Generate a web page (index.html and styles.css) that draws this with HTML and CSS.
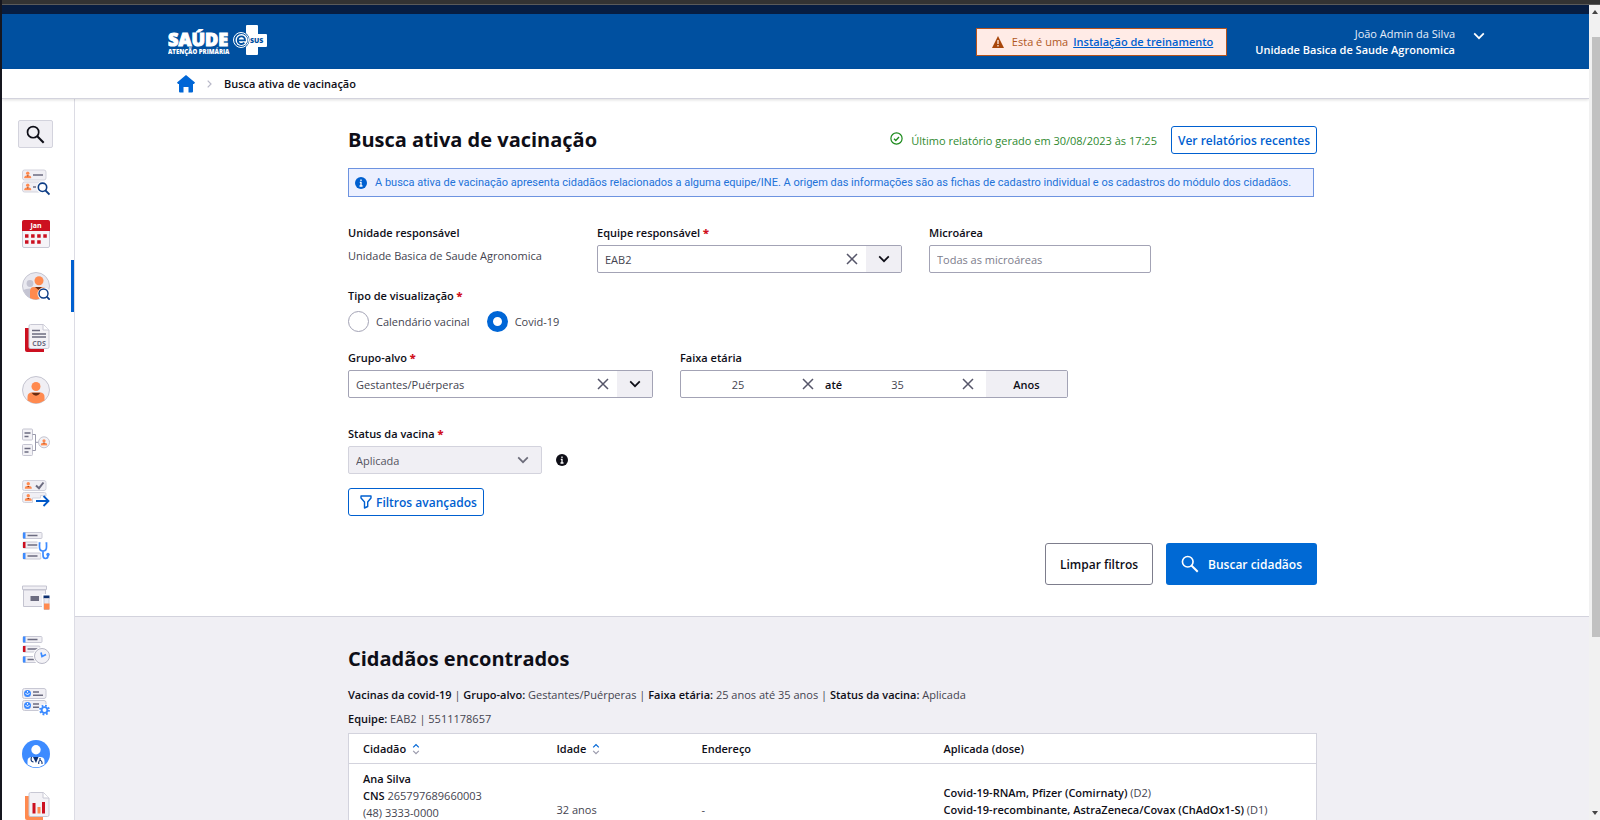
FILE: index.html
```html
<!DOCTYPE html>
<html lang="pt-BR">
<head>
<meta charset="utf-8">
<title>Busca ativa de vacinação</title>
<link rel="stylesheet" href="styles.css">
</head>
<body>
<svg class="defs" width="0" height="0" aria-hidden="true">
  <symbol id="lens" viewBox="0 0 20 20"><circle cx="7.5" cy="7.5" r="5.900" fill="none" stroke="currentColor" stroke-width="1.8"/><path d="M11.6 11.6l7 7" stroke="currentColor" stroke-width="2.200"/></symbol>
  <symbol id="down" viewBox="0 0 12 12"><path d="M1.2 3.4L6 8.2l4.800-4.800" fill="none" stroke="currentColor" stroke-width="1.7"/></symbol>
  <symbol id="close" viewBox="0 0 12 12"><path d="M1 1l10 10M11 1L1 11" fill="none" stroke="currentColor" stroke-width="1.500"/></symbol>
  <symbol id="info" viewBox="0 0 12 12"><circle cx="6" cy="6" r="6" fill="currentColor"/><path d="M6 2.400v1.500M4.800 5.300H6v3.500M4.500 9h3" fill="none" stroke="#fff" stroke-width="1.300"/></symbol>
  <symbol id="sort" viewBox="0 0 8 12"><path d="M1.200 4.400L4 1.500l2.800 2.900" fill="none" stroke="#0066d6" stroke-width="1.200"/><path d="M1.200 7.800L4 10.700l2.800-2.900" fill="none" stroke="#9a9aac" stroke-width="1.200"/></symbol>
  <symbol id="bust" viewBox="0 0 8 8"><circle cx="4" cy="2.200" r="1.800" fill="#ff8a4f"/><path d="M.3 7.600V6.500Q.5 4.500 2.800 4.500h2.400q2.300 0 2.500 2v1.100z" fill="#ff8a4f"/><path d="M2.800 4.500h2.400L4 5.700z" fill="#6b2c11"/></symbol>
</svg>
<div class="window">
  <div class="window-edge"></div>
  <div class="app">
    <div class="page">
      <div class="gov-strip"></div>
      <header class="topbar">
        <a class="logo" href="#" aria-label="e-SUS Atenção Primária">
          <svg width="100" height="34" viewBox="0 0 100 34">
            <text class="logo-name" x="0" y="21">SAÚDE</text>
            <text class="logo-sub" x="0" y="29">ATENÇÃO PRIMÁRIA</text>
            <path d="M79 0h10q1 0 1 1v8h8q1 0 1 1v11q0 1-1 1h-8v7q0 1-1 1H79q-1 0-1-1V1q0-1 1-1z" fill="#fff"/>
            <circle cx="73" cy="15" r="8.500" fill="#0050a0"/><circle cx="73" cy="15" r="7.500" fill="none" stroke="#fff" stroke-width="1"/><circle cx="73.500" cy="15" r="6" fill="#fff"/>
            <path d="M70 15.300h7c.2-5.300-7-5.300-7.200-.2-.1 4.400 4.600 4.700 6.600 2.500" fill="none" stroke="#0050a0" stroke-width="1.800"/>
            <text class="logo-sus" x="82" y="18">SUS</text>
          </svg>
        </a>
        <div class="training">
          <svg width="12" height="12" viewBox="0 0 12 12"><path d="M6 0l6 12H0z" fill="#a8460b"/><path d="M6 4v4M6 9v1.500" stroke="#ffebe6" stroke-width="1.300"/></svg>
          <span>Esta é uma</span><a href="#">Instalação de treinamento</a>
        </div>
        <button class="account" type="button">
          <span class="account-text"><span>João Admin da Silva</span><strong>Unidade Basica de Saude Agronomica</strong></span>
          <svg width="12" height="12"><use href="#down"/></svg>
        </button>
      </header>
      <nav class="crumbs" aria-label="Trilha">
        <a href="#" aria-label="Início"><svg width="18" height="18" viewBox="0 0 18 18"><path d="M9 0l9 7.500-1 1.500h-1v7.500q0 1-1 1h-3.500v-5.500h-5v5.500H3q-1 0-1-1V9H1L0 7.500z" fill="#0066d6"/></svg></a>
        <svg width="5" height="8" viewBox="0 0 5 8"><path d="M.7.700L4 4 .7 7.300" fill="none" stroke="#b8b8c8" stroke-width="1.200"/></svg>
        <strong>Busca ativa de vacinação</strong>
      </nav>
      <div class="body">
        <nav class="side" aria-label="Módulos">
          <button class="side-search" type="button" aria-label="Pesquisar"><svg width="19" height="19"><use href="#lens"/></svg></button>
          <a href="#" aria-label="Cidadãos"><svg viewBox="0 0 28 28"><g fill="#f0eff4" stroke="#d3d3dd"><rect x=".5" y="2" width="23.500" height="10" rx="2"/><rect x=".5" y="14" width="23.500" height="10" rx="2"/></g><use href="#bust" x="2" y="3.200" width="7.500" height="7.500"/><use href="#bust" x="2" y="15.200" width="7.500" height="7.500"/><path d="M11 7h10M11 19h3" stroke="#6c6c80" stroke-width="1.300"/><circle cx="21" cy="19.500" r="6.500" fill="#fff"/><circle cx="20.500" cy="19.300" r="4.200" fill="#fff" stroke="#0c3c85" stroke-width="1.600"/><path d="M23.500 22.500l4 4" stroke="#0c3c85" stroke-width="1.800"/></svg></a>
          <a href="#" aria-label="Agenda"><svg viewBox="0 0 28 28"><rect x=".5" y=".5" width="27" height="27" rx="1.500" fill="#f5f4f8" stroke="#c8c8d4"/><path d="M0 11V2q0-2 2-2h24q2 0 2 2v9z" fill="#cc1020"/><text class="cal" x="14" y="8">Jan</text><path d="M3 16h22" stroke="#cc1020" stroke-width="3.500" stroke-dasharray="3.500 2.600"/><path d="M3 22h16" stroke="#cc1020" stroke-width="3.500" stroke-dasharray="3.500 2.600"/></svg></a>
          <a class="current" href="#" aria-label="Busca ativa" aria-current="page"><svg viewBox="0 0 28 28"><circle cx="14" cy="14" r="13.500" fill="#e9e9f0" stroke="#c4c4d0"/><circle cx="8" cy="11.500" r="3.400" fill="#c4c4d2"/><path d="M1.500 18q2-1.500 6.500-1.500v9.500Q3 23 1.500 18z" fill="#c4c4d2"/><circle cx="17" cy="8.700" r="4.500" fill="#ff8a4f"/><path d="M8 26v-7q0-4 4-4h8q5 0 5 5-3 7-11 7.500-3 0-6-1.500z" fill="#ff8a4f"/><path d="M13 15h7l-3.500 3z" fill="#6b2c11"/><circle cx="22" cy="22" r="6.500" fill="#fff"/><circle cx="21.500" cy="21.500" r="4.500" fill="#fff" stroke="#0c3c85" stroke-width="1.400"/><path d="M24.700 24.700l3 3" stroke="#0c3c85" stroke-width="1.800"/></svg></a>
          <a href="#" aria-label="CDS"><svg viewBox="0 0 28 28"><path d="M3 4h19v24H5q-2 0-2-2z" fill="#cc1020"/><path d="M8.500.500h13l5.500 5.500v17q0 1.500-1.500 1.500h-17q-1.500 0-1.500-1.500V2Q7 .500 8.500.500z" fill="#f3f2f6" stroke="#c8c8d4"/><path d="M21 .500V6h6" fill="#fff" stroke="#c8c8d4"/><path d="M10 6.500h8M10 10h14M10 13h14" stroke="#6c6c80" stroke-width="1.300"/><text class="cds" x="17" y="22">CDS</text></svg></a>
          <a href="#" aria-label="Cidadão"><svg viewBox="0 0 28 28"><circle cx="14" cy="14" r="13.500" fill="#f0eff4" stroke="#c4c4d0"/><circle cx="14" cy="10.500" r="4.500" fill="#ff8a4f"/><path d="M5.500 24.500V21q0-4.500 4.500-4.500h8q4.500 0 4.500 4.500v3.500Q14 30 5.500 24.500z" fill="#ff8a4f"/><path d="M9.500 16.800h9q-4.500 6-9 0z" fill="#6b2c11"/></svg></a>
          <a href="#" aria-label="Território"><svg viewBox="0 0 28 28"><g fill="#f3f2f6" stroke="#c4c4d0"><rect x=".5" y="1" width="10" height="11" rx="1"/><rect x=".5" y="16.500" width="10" height="11" rx="1"/><path d="M10.500 6.500h3v16h-3M13.500 14.300H17" fill="none" stroke="#9a9aac"/><circle cx="22" cy="14.300" r="5.500"/></g><path d="M2.500 5h6M2.500 8.500h4M2.500 20.500h6M2.500 24h4" stroke="#6c6c80" stroke-width="1.400"/><use href="#bust" x="18.500" y="10.800" width="7" height="7"/></svg></a>
          <a href="#" aria-label="Encaminhamentos"><svg viewBox="0 0 28 28"><g fill="#f0eff4" stroke="#d3d3dd"><rect x=".5" y=".5" width="23.500" height="10" rx="2"/><path d="M24 16v-2q0-1.500-1.500-1.500h-20q-2 0-2 2v6q0 2 2 2h8V18h8v-2.500z"/></g><use href="#bust" x="2.500" y="1.700" width="7.500" height="7.500"/><use href="#bust" x="2.500" y="13.700" width="7.500" height="7.500"/><path d="M14 5.500l3 2.700L21.500 2.500" fill="none" stroke="#6c6c80" stroke-width="2"/><path d="M14 21h12M21.500 16l5 5-5 5" fill="none" stroke="#0058c8" stroke-width="1.800"/></svg></a>
          <a href="#" aria-label="Atendimentos"><svg viewBox="0 0 28 28"><g fill="#f0eff4" stroke="#c8c8d4"><rect x="1" y=".5" width="19" height="6" rx="1"/><rect x="1" y="10" width="17" height="6" rx="1"/><rect x="1" y="21" width="18" height="6" rx="1"/></g><path d="M1 .5h2.500v6H1zM1 21h2.500v6H1z" fill="#3d8bff"/><path d="M1 10h2.500v6H1z" fill="#cc1020"/><path d="M5.500 3.500h10M5.500 13h10M5.500 24h10" stroke="#6c6c80" stroke-width="1.400"/><path d="M18.500 11h-1v4q0 4 3.500 4t3.500-4v-4h-1M21 19v4q0 3.500 3 3.500t3-3.500v-1.500" fill="none" stroke="#fff" stroke-width="4"/><path d="M18.500 11h-1v4q0 4 3.500 4t3.500-4v-4h-1M21 19v4q0 3.500 2.500 3.500T26 23.500V23" fill="none" stroke="#3d8bff" stroke-width="1.700"/><circle cx="26" cy="22.500" r="1.700" fill="#3d8bff"/></svg></a>
          <a href="#" aria-label="Imunobiológicos"><svg viewBox="0 0 28 28"><path d="M1.500 6h22v16.500h-22z" fill="#f0eff4" stroke="#c4c4d0"/><path d="M.500 2h24v3.500H.500z" fill="#f0eff4" stroke="#c4c4d0"/><path d="M8.500 12h8.500v5H8.500z" fill="#6c6c80"/><path d="M20 10h8v18h-8z" fill="#fff"/><path d="M21.500 11.500h6v3h-6z" fill="#0c2f70"/><path d="M22 14.500h5v11h-5z" fill="#e9e9f0" stroke="#c8c8d4"/><path d="M22 19.500h5.500v6H22z" fill="#ff8a4f"/></svg></a>
          <a href="#" aria-label="Histórico"><svg viewBox="0 0 28 28"><g fill="#f0eff4" stroke="#c8c8d4"><rect x="1" y=".5" width="19" height="6" rx="1"/><rect x="1" y="10" width="17" height="6" rx="1"/><rect x="1" y="20.500" width="16" height="6" rx="1"/></g><path d="M1 .5h2.500v6H1zM1 20.500h2.500v6H1z" fill="#3d8bff"/><path d="M1 10h2.500v6H1z" fill="#cc1020"/><path d="M5.500 3.500h10M5.500 13h10M5.500 23.500h8" stroke="#6c6c80" stroke-width="1.400"/><circle cx="20" cy="20" r="9" fill="#fff"/><circle cx="20" cy="20" r="7.500" fill="#f3f2f6" stroke="#b8b8c6"/><path d="M19 16.500l1 4 4-2" fill="none" stroke="#3d8bff" stroke-width="1.700"/></svg></a>
          <a href="#" aria-label="Configurações"><svg viewBox="0 0 28 28"><g fill="#f0eff4" stroke="#c8c8d4"><rect x=".5" y=".5" width="23.500" height="10" rx="2"/><rect x=".5" y="12.500" width="23.500" height="10" rx="2"/></g><g fill="#3d8bff"><circle cx="5.500" cy="5.500" r="3.500"/><circle cx="5.500" cy="17.500" r="3.500"/></g><path d="M3.500 5l2 2 2-2M3.500 17l2 2 2-2M5.500 3v1.500M5.500 15v1.500" fill="none" stroke="#fff"/><path d="M11 4h6M11 7.300h10M11 16h6M11 19.300h6" stroke="#6c6c80" stroke-width="1.400"/><circle cx="22.500" cy="22" r="6" fill="#fff"/><circle cx="22.500" cy="22" r="4.400" fill="none" stroke="#3d8bff" stroke-width="2" stroke-dasharray="1.730 1.730"/><circle cx="22.500" cy="22" r="2.900" fill="#fff" stroke="#3d8bff" stroke-width="1.900"/></svg></a>
          <a href="#" aria-label="Profissionais"><svg viewBox="0 0 28 28"><circle cx="14" cy="14" r="14" fill="#3d8bff"/><circle cx="14" cy="9.700" r="4.700" fill="#fff"/><path d="M5.500 24.500V21q0-4 4.500-4h8q4.500 0 4.500 4v3.500Q14 30 5.500 24.500z" fill="#fff"/><path d="M11 17h5.500l-2.500 6z" fill="#0c2f70"/><path d="M9.500 17q-1.500 4.500 2 5M18 18v2.500M16.700 24v-1.500q0-2 1.600-2t1.700 2V24" fill="none" stroke="#0c2f70" stroke-width="1.100"/></svg></a>
          <a href="#" aria-label="Relatórios"><svg viewBox="0 0 28 28"><path d="M3 4h18v24H5q-2 0-2-2z" fill="#ff8a4f"/><path d="M8.500.500h13l5.500 5.500v17q0 1.500-1.500 1.500h-17q-1.500 0-1.500-1.500V2Q7 .500 8.500.500z" fill="#f3f2f6" stroke="#c8c8d4"/><path d="M21 .500V6h6" fill="#fff" stroke="#c8c8d4"/><path d="M10.500 11h3v10.500h-3zM20 10h3v11.500h-3z" fill="#cc1020"/><path d="M15.500 15h3v6.500h-3z" fill="#ff8a4f"/></svg></a>
        </nav>
        <main>
          <section class="search">
            <div class="wrap">
              <div class="title-row">
                <h1>Busca ativa de vacinação</h1>
                <p class="last"><svg width="13" height="13" viewBox="0 0 13 13"><circle cx="6.500" cy="6.500" r="5.600" fill="none" stroke="#1b8a1b" stroke-width="1.200"/><path d="M4 6.700l1.800 1.800L9 5" fill="none" stroke="#1b8a1b" stroke-width="1.300"/></svg>Último relatório gerado em 30/08/2023 às 17:25</p>
                <button class="btn outline" type="button">Ver relatórios recentes</button>
              </div>
              <div class="notice"><svg width="12" height="12"><use href="#info"/></svg><p>A busca ativa de vacinação apresenta cidadãos relacionados a alguma equipe/INE. A origem das informações são as fichas de cadastro individual e os cadastros do módulo dos cidadãos.</p></div>
              <form>
                <div class="row first">
                  <div class="field unit"><span class="label">Unidade responsável</span><p class="value">Unidade Basica de Saude Agronomica</p></div>
                  <div class="field wide"><label class="label" for="equipe">Equipe responsável <b>*</b></label>
                    <div class="box"><select id="equipe"><option>EAB2</option></select><button class="clear" type="button" aria-label="Limpar equipe"><svg width="12" height="12"><use href="#close"/></svg></button><button class="open" type="button" aria-label="Abrir equipes"><svg width="12" height="12"><use href="#down"/></svg></button></div></div>
                  <div class="field micro"><label class="label" for="micro">Microárea</label><div class="box"><input id="micro" type="text" placeholder="Todas as microáreas"></div></div>
                </div>
                <fieldset class="kind"><legend class="label">Tipo de visualização <b>*</b></legend>
                  <div class="radios"><label><input type="radio" name="tipo">Calendário vacinal</label><label><input type="radio" name="tipo" checked>Covid-19</label></div>
                </fieldset>
                <div class="row second">
                  <div class="field wide"><label class="label" for="grupo">Grupo-alvo <b>*</b></label>
                    <div class="box"><select id="grupo"><option>Gestantes/Puérperas</option></select><button class="clear" type="button" aria-label="Limpar grupo"><svg width="12" height="12"><use href="#close"/></svg></button><button class="open" type="button" aria-label="Abrir grupos"><svg width="12" height="12"><use href="#down"/></svg></button></div></div>
                  <div class="field ages"><label class="label" for="de">Faixa etária</label>
                    <div class="box"><input id="de" type="text" value="25"><button class="clear from" type="button" aria-label="Limpar idade inicial"><svg width="12" height="12"><use href="#close"/></svg></button><label class="until" for="ate">até</label><input id="ate" type="text" value="35"><button class="clear to" type="button" aria-label="Limpar idade final"><svg width="12" height="12"><use href="#close"/></svg></button><button class="years" type="button">Anos</button></div></div>
                </div>
                <div class="row third">
                  <div class="field status"><label class="label" for="status">Status da vacina <b>*</b></label>
                    <div class="box disabled"><select id="status" disabled><option>Aplicada</option></select><svg width="12" height="12"><use href="#down"/></svg></div></div>
                  <svg class="hint" width="12" height="12"><use href="#info"/></svg>
                </div>
                <button class="btn outline filter" type="button"><svg width="12" height="14" viewBox="0 0 12 14"><path d="M1 1h10v2L7.700 7v4.500L4.500 13V7L1 3z" fill="none" stroke="#0060d0" stroke-width="1.400" stroke-linejoin="round"/></svg>Filtros avançados</button>
                <div class="actions"><button class="btn big plain" type="reset">Limpar filtros</button><button class="btn big primary" type="button"><svg width="18" height="18"><use href="#lens"/></svg>Buscar cidadãos</button></div>
              </form>
            </div>
          </section>
          <section class="results">
            <div class="wrap">
              <h2>Cidadãos encontrados</h2>
              <p class="summary"><strong>Vacinas da covid-19</strong> | <strong>Grupo-alvo:</strong> Gestantes/Puérperas | <strong>Faixa etária:</strong> 25 anos até 35 anos | <strong>Status da vacina:</strong> Aplicada</p>
              <p class="summary"><strong>Equipe:</strong> EAB2 | 5511178657</p>
              <table>
                <colgroup><col class="c1"><col class="c2"><col class="c3"><col></colgroup>
                <thead><tr><th><button type="button">Cidadão<svg width="8" height="12"><use href="#sort"/></svg></button></th><th><button type="button">Idade<svg width="8" height="12"><use href="#sort"/></svg></button></th><th>Endereço</th><th>Aplicada (dose)</th></tr></thead>
                <tbody><tr><td><strong>Ana Silva</strong><br><strong>CNS</strong> 265797689660003<br>(48) 3333-0000</td><td class="mid">32 anos</td><td class="mid">-</td><td class="doses"><strong>Covid-19-RNAm, Pfizer (Comirnaty)</strong> (D2)<br><strong>Covid-19-recombinante, AstraZeneca/Covax (ChAdOx1-S)</strong> (D1)</td></tr></tbody>
              </table>
            </div>
          </section>
        </main>
      </div>
    </div>
    <div class="scroll" aria-hidden="true"><i class="up"></i><div class="thumb"></div><i class="dn"></i></div>
  </div>
</div>
</body>
</html>
```
FILE: styles.css
```css
* { box-sizing: border-box; }
body { margin: 0; font: 11px/17px "Open Sans", sans-serif; color: #44444f; background: #fff; }
h1, h2, p, form, fieldset { margin: 0; padding: 0; border: 0; }
button, input, select { font: inherit; color: inherit; background: none; border: 0; padding: 0; margin: 0; }
svg { display: block; flex: none; }
strong { color: #0e0e17; font-weight: 700; }
.defs { position: absolute; }
.window { height: 100vh; overflow: hidden; display: flex; flex-direction: column; border-left: 2px solid #15161f; }
.window-edge { height: 5px; flex: none; background: #333; border-bottom: 1px solid #5a5a5a; }
.app { flex: 1; min-height: 0; display: flex; }
.page { flex: 1; min-width: 0; overflow: hidden; }
.gov-strip { height: 9px; background: #071d41; }
.topbar { height: 55px; background: #0050a0; display: flex; align-items: center; padding: 0 104px 0 166px; }
.logo { margin-right: auto; }
.logo-name { font: 800 18px "Open Sans", sans-serif; fill: #fff; stroke: #fff; stroke-width: 1px; }
.logo-sub { font: 800 6px "Open Sans", sans-serif; fill: #fff; }
.logo-sus { font: 800 7px "Open Sans", sans-serif; fill: #0050a0; }
.training { display: flex; align-items: center; height: 28px; padding: 0 13px 0 15px; border: 1px solid #b5531d; background: #ffebe6; color: #b0581e; margin-right: 28px; }
.training span { margin: 0 5px 0 8px; }
.training a { color: #0060d0; font-weight: 600; }
.account { display: flex; align-items: flex-start; gap: 18px; color: #e6eefa; text-align: right; }
.account-text { display: flex; flex-direction: column; line-height: 16px; }
.account strong { color: #fff; font-weight: 600; }
.account svg { margin-top: 4px; color: #fff; }
.crumbs { height: 30px; display: flex; align-items: center; gap: 12px; padding-left: 175px; border-bottom: 1px solid #d3d3dd; box-shadow: 0 1px 3px #0002; position: relative; }
.crumbs strong { font-weight: 600; }
.body { display: flex; }
.side { width: 73px; flex: none; border-right: 1px solid #dcdce4; display: flex; flex-direction: column; align-items: center; padding-top: 21px; }
.side-search { width: 35px; height: 28px; margin: 0 5px 8px 0; border: 1px solid #d3d3dd; border-radius: 2px; background: #f0eff4; color: #0e0e17; display: grid; place-items: center; }
.side a { align-self: stretch; height: 52px; flex: none; display: grid; place-items: center; padding-right: 4px; }
.side a svg { width: 28px; height: 28px; }
.side .current { border-right: 3px solid #0060d0; padding-right: 1px; }
.cal { font: 700 7px "Open Sans", sans-serif; fill: #fff; text-anchor: middle; }
.cds { font: 700 7px "Open Sans", sans-serif; fill: #6c6c80; text-anchor: middle; }
main { flex: 1; min-width: 0; }
.wrap { max-width: 969px; margin-left: 273px; margin-right: 24px; }
.search { padding: 27px 0 31px; }
.title-row { display: flex; align-items: center; height: 28px; }
h1, h2 { font-size: 20px; line-height: 28px; font-weight: 700; color: #0e0e17; }
h1 { margin-right: auto; }
.last { display: flex; gap: 8px; color: #2f8a2f; margin-right: 14px; }
.btn { height: 28px; border-radius: 3px; font-weight: 600; font-size: 12px; white-space: nowrap; display: flex; align-items: center; justify-content: center; }
.outline { border: 1px solid #0060d0; color: #0060d0; padding: 0 6px; background: #fff; }
.notice { margin: 14px 3px 0 0; height: 29px; border: 1px solid #6d93e0; background: #ecf0ff; color: #2272d8; display: flex; align-items: center; gap: 8px; padding: 0 6px; white-space: nowrap; font-family: Roboto, sans-serif; }
.notice svg { color: #0060d0; }
.label { display: block; font-weight: 600; color: #0e0e17; padding: 0; }
.label b { color: #d01020; }
.row { display: flex; gap: 27px; }
.first { margin-top: 27px; }
.value { margin-top: 6px; }
.unit { width: 222px; }
.wide { width: 305px; }
.micro { width: 222px; }
.ages { width: 388px; }
.status { width: 194px; }
.box { margin-top: 4px; height: 28px; border: 1px solid #a3a3b5; border-radius: 2px; display: flex; align-items: stretch; overflow: hidden; background: #fff; }
.box select, .box input { appearance: none; flex: 1; min-width: 0; padding: 0 7px; outline: 0; }
.box input::placeholder { color: #7d7d8c; opacity: 1; }
.box svg { margin: auto; }
.clear { width: 29px; color: #56566a; }
.open { width: 35px; background: #f0eff4; color: #0e0e17; }
.kind { margin-top: 14px; }
.radios { display: flex; gap: 17px; margin-top: 7px; }
.radios label { display: flex; align-items: center; gap: 7px; }
.radios input { appearance: none; width: 21px; height: 21px; border: 1px solid #a3a3b5; border-radius: 50%; background: #fff; }
.radios input:checked { border: 6px solid #0066d6; }
.second { margin-top: 17px; }
.ages .box input { text-align: center; }
.ages #de { flex: none; width: 114px; }
.ages .from { width: 26px; }
.ages .to { width: 37px; }
.until { align-self: center; padding: 0 4px; font-weight: 600; color: #0e0e17; }
.years { width: 81px; background: #f0eff4; color: #0e0e17; font-weight: 600; }
.third { margin-top: 27px; gap: 14px; }
.disabled { background: #f0eff4; border-color: #d3d3dd; color: #6c6c7a; }
.disabled select { opacity: 1; color: #55555f; }
.disabled svg { margin: auto 12px; }
.hint { align-self: flex-end; margin-bottom: 8px; color: #0e0e17; }
.filter { margin-top: 14px; gap: 4px; padding: 0 6px 0 11px; }
.actions { margin-top: 27px; display: flex; justify-content: flex-end; gap: 13px; }
.big { height: 42px; padding: 0 14px; font-size: 12px; }
.plain { border: 1px solid #7d7d8c; color: #0e0e17; }
.primary { background: #0069d4; color: #fff; gap: 9px; padding: 0 15px; }
.results { background: #f0eff4; border-top: 1px solid #d3d3dd; padding: 28px 0 24px; }
.results h2 { margin-bottom: 10px; }
.results strong { font-weight: 600; }
.summary { line-height: 24px; }
table { margin-top: 2px; width: 100%; table-layout: fixed; border-collapse: collapse; background: #fff; border: 1px solid #d3d3dd; }
.c1 { width: 194px; }
.c2 { width: 145px; }
.c3 { width: 242px; }
th, td { text-align: left; vertical-align: top; padding: 6px 0 6px 14px; }
th { font-weight: 600; color: #0e0e17; border-bottom: 1px solid #d3d3dd; }
th button { display: flex; align-items: center; gap: 6px; }
td { padding-top: 6px; padding-bottom: 40px; }
.mid { padding-top: 37px; }
.doses { padding-top: 20px; }
.scroll { width: 11px; flex: none; background: #f1f1f1; display: flex; flex-direction: column; align-items: center; padding: 5px 0; }
.scroll .thumb { height: 600px; width: 8px; align-self: flex-end; background: #c1c1c1; margin: 23px 0 auto; }
.up, .dn { border: 3px solid transparent; height: 0; }
.up { border-top: 0; border-bottom: 4px solid #444; }
.dn { border-bottom: 0; border-top: 4px solid #444; }
```
